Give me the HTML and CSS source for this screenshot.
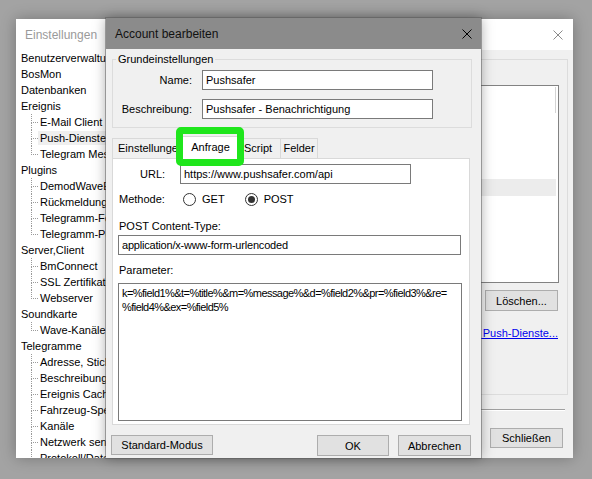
FILE: index.html
```
<!DOCTYPE html>
<html>
<head>
<meta charset="utf-8">
<title>Account bearbeiten</title>
<link rel="stylesheet" href="styles.css">
</head>
<body>
<div class="desktop">
  <div class="window main-win">
    <div class="titlebar main-title">
      <span class="title-text">Einstellungen</span>
      <svg class="close-icon" width="10" height="10" viewBox="0 0 10 10"><path d="M0.5 0.5L9.5 9.5M9.5 0.5L0.5 9.5" stroke="#8a8a8a" stroke-width="1" fill="none"/></svg>
    </div>
    <div class="main-body">
      <ul class="tree">
        <li class="root">Benutzerverwaltung</li>
        <li class="root">BosMon</li>
        <li class="root">Datenbanken</li>
        <li class="root">Ereignis</li>
        <li class="child">E-Mail Client</li>
        <li class="child"><span class="sel">Push-Dienste</span></li>
        <li class="child last">Telegram Messenger</li>
        <li class="root">Plugins</li>
        <li class="child">DemodWaveEngine</li>
        <li class="child">Rückmeldungen</li>
        <li class="child">Telegramm-Fernwirk</li>
        <li class="child last">Telegramm-Post</li>
        <li class="root">Server,Client</li>
        <li class="child">BmConnect</li>
        <li class="child">SSL Zertifikate</li>
        <li class="child last">Webserver</li>
        <li class="root">Soundkarte</li>
        <li class="child last">Wave-Kanäle</li>
        <li class="root">Telegramme</li>
        <li class="child">Adresse, Stichwort</li>
        <li class="child">Beschreibungen</li>
        <li class="child">Ereignis Cache</li>
        <li class="child">Fahrzeug-Speicher</li>
        <li class="child">Kanäle</li>
        <li class="child">Netzwerk senden</li>
        <li class="child">Protokoll/Datei</li>
      </ul>
      <div class="right-col">
        <div class="group-right">
          <div class="listbox">
            <div class="scroll-thumb"></div>
            <div class="list-sel"></div>
          </div>
          <div class="btn btn-loeschen">Löschen...</div>
          <a class="link">Weitere Push-Dienste...</a>
        </div>
        <div class="separator"></div>
        <div class="main-buttons">
          <div class="btn btn-close">Schließen</div>
        </div>
      </div>
    </div>
  </div>

  <div class="window dialog">
    <div class="titlebar dlg-title">
      <span class="title-text">Account bearbeiten</span>
      <svg class="close-icon" width="10" height="10" viewBox="0 0 10 10"><path d="M0.5 0.5L9.5 9.5M9.5 0.5L0.5 9.5" stroke="#000" stroke-width="1" fill="none"/></svg>
    </div>
    <div class="dlg-body">
      <fieldset class="group">
        <legend>Grundeinstellungen</legend>
        <div class="form-grid">
          <span class="lbl">Name:</span>
          <div class="input">Pushsafer</div>
          <span class="lbl">Beschreibung:</span>
          <div class="input">Pushsafer - Benachrichtigung</div>
        </div>
      </fieldset>

      <div class="tabs">
        <div class="tab tab-einst">Einstellungen</div>
        <div class="tab tab-active">Anfrage</div>
        <div class="tab tab-script">Script</div>
        <div class="tab tab-felder">Felder</div>
      </div>
      <div class="tab-panel">
        <div class="row-url">
          <span class="lbl-url">URL:</span>
          <div class="input input-url">https://www.pushsafer.com/api</div>
        </div>
        <div class="row-method">
          <span class="lbl-method">Methode:</span>
          <span class="radio"></span>
          <span class="radio-text">GET</span>
          <span class="radio checked"></span>
          <span class="radio-text">POST</span>
        </div>
        <div class="plain-lbl lbl-ct">POST Content-Type:</div>
        <div class="input input-wide input-ct">application/x-www-form-urlencoded</div>
        <div class="plain-lbl lbl-param">Parameter:</div>
        <div class="textarea">k=%field1%&amp;t=%title%&amp;m=%message%&amp;d=%field2%&amp;pr=%field3%&amp;re=<br>%field4%&amp;ex=%field5%</div>
      </div>

      <div class="dlg-buttons">
        <div class="btn btn-std">Standard-Modus</div>
        <div class="btn btn-ok">OK</div>
        <div class="btn btn-cancel">Abbrechen</div>
      </div>
    </div>
  </div>

  <div class="highlight"></div>
</div>
</body>
</html>
```

FILE: styles.css
```
* { box-sizing: border-box; }

html, body {
  margin: 0;
  padding: 0;
  width: 592px;
  height: 479px;
  overflow: hidden;
  background: #a3a3a3;
  font-family: "Liberation Sans", Arial, sans-serif;
  font-size: 11px;
  color: #000;
}

.desktop {
  position: relative;
  width: 592px;
  height: 479px;
}

.window {
  position: absolute;
  display: flex;
  flex-direction: column;
  background: #f0f0f0;
}

.titlebar {
  height: 31px;
  flex: none;
  display: flex;
  align-items: center;
  justify-content: space-between;
  font-size: 12px;
}

.close-icon { display: block; }

/* ---------- main window ---------- */
.main-win {
  left: 16px;
  top: 19px;
  width: 557px;
  height: 439px;
  z-index: 1;
  box-shadow: 0 0 14px rgba(0, 0, 0, 0.28);
}

.main-title {
  background: #fff;
  padding: 1px 10px 0 9px;
}
.main-title .title-text { color: #9a9a9a; }

.main-body {
  flex: 1;
  display: flex;
  min-height: 0;
}

.tree {
  width: 200px;
  flex: none;
  margin: 0;
  padding: 0;
  list-style: none;
  background: #fff;
  overflow: hidden;
}

.tree li {
  height: 16px;
  line-height: 16px;
  white-space: nowrap;
  position: relative;
}

.tree .root { padding-left: 5px; }
.tree .child { padding-left: 24px; }

.tree .child::before {
  content: "";
  position: absolute;
  left: 15px;
  top: 0;
  width: 6px;
  height: 8px;
  border-left: 1px dotted #9a9a9a;
  border-bottom: 1px dotted #9a9a9a;
}
.tree .child:not(.last)::after {
  content: "";
  position: absolute;
  left: 15px;
  top: 8px;
  height: 8px;
  border-left: 1px dotted #9a9a9a;
}

.tree .sel {
  background: #efefef;
  padding: 1px 2px;
  margin-left: -2px;
}

.right-col {
  flex: 1;
  display: flex;
  flex-direction: column;
  padding-right: 5px;
}

.group-right {
  margin-top: 9px;
  height: 336px;
  border: 1px solid #dcdcdc;
  display: flex;
  flex-direction: column;
  align-items: flex-end;
}

.listbox {
  position: relative;
  margin-top: 25px;
  margin-right: 8px;
  width: 300px;
  height: 198px;
  border: 1px solid #828282;
  background: #fff;
  padding: 93px 2px 0 0;
}

.scroll-thumb {
  position: absolute;
  right: 2px;
  top: 1px;
  width: 1px;
  height: 26px;
  background: #d4d4d4;
}

.list-sel {
  height: 17px;
  background: #ececec;
}

.btn {
  display: flex;
  align-items: center;
  justify-content: center;
  background: #e1e1e1;
  border: 1px solid #adadad;
  white-space: nowrap;
}

.btn-loeschen {
  margin-top: 7px;
  margin-right: 9px;
  width: 73px;
  height: 21px;
}

.link {
  margin-top: 15px;
  margin-right: 9px;
  line-height: 14px;
  color: #0000ee;
  text-decoration: underline;
  white-space: nowrap;
}

.separator {
  margin-top: 14px;
  margin-right: 3px;
  border-top: 1px solid #a0a0a0;
  border-bottom: 1px solid #fff;
}

.main-buttons {
  margin-top: 17px;
  display: flex;
  justify-content: flex-end;
}

.btn-close {
  width: 73px;
  height: 20px;
  margin-right: 5px;
}

/* ---------- dialog ---------- */
.dialog {
  left: 106px;
  top: 18px;
  width: 375px;
  height: 440px;
  z-index: 2;
  box-shadow: 0 0 0 1px rgba(90, 90, 90, 0.5), 0 0 12px rgba(0, 0, 0, 0.35);
}

.dlg-title {
  background: #8b8b8b;
  padding: 1px 9px 0 9px;
  color: #111;
}

.dlg-body {
  flex: 1;
  display: flex;
  flex-direction: column;
  padding: 3px 9px 0 6px;
}

.group {
  margin: 0;
  padding: 4px 0 8px 0;
  border: 1px solid #dcdcdc;
  min-width: 0;
}

.group legend {
  margin-left: 3px;
  padding: 0 2px;
  line-height: 14px;
}

.form-grid {
  display: grid;
  grid-template-columns: 79px 231px;
  column-gap: 10px;
  row-gap: 9px;
  align-items: center;
}

.lbl { text-align: right; }

.input {
  height: 20px;
  border: 1px solid #7a7a7a;
  background: #fff;
  padding: 0 3px;
  line-height: 18px;
  white-space: nowrap;
  overflow: hidden;
}

.tabs {
  margin-top: 10px;
  height: 20px;
  display: flex;
  align-items: flex-end;
  position: relative;
  z-index: 1;
}

.tab {
  height: 20px;
  border: 1px solid #d9d9d9;
  border-bottom: none;
  background: #f0f0f0;
  line-height: 19px;
  white-space: nowrap;
  overflow: hidden;
  margin-right: -1px;
}

.tab-einst { width: 67px; padding-left: 5px; }
.tab-active {
  width: 65px;
  height: 23px;
  margin-bottom: -1px;
  background: #fff;
  text-align: center;
  line-height: 21px;
}
.tab-script { width: 39px; padding-left: 1px; }
.tab-felder { width: 38px; text-align: center; }

.tab-panel {
  margin-right: 2px;
  height: 267px;
  border: 1px solid #d9d9d9;
  background: #fff;
  padding: 5px 0 0 5px;
  display: flex;
  flex-direction: column;
}

.row-url {
  display: flex;
  align-items: center;
  height: 20px;
}
.lbl-url { margin-left: 22px; width: 40px; }
.input-url { width: 231px; }

.row-method {
  margin-top: 5px;
  height: 20px;
  display: flex;
  align-items: center;
}
.lbl-method { width: 65px; padding-left: 1px; }

.radio {
  width: 13px;
  height: 13px;
  border: 1px solid #333;
  border-radius: 50%;
  background: #fff;
  display: flex;
  align-items: center;
  justify-content: center;
}
.radio.checked::after {
  content: "";
  width: 7px;
  height: 7px;
  border-radius: 50%;
  background: #333;
}
.radio-text { margin-left: 6px; margin-right: 20px; }

.plain-lbl {
  line-height: 14px;
  padding-left: 1px;
}
.lbl-ct { margin-top: 10px; }
.input-wide { margin-top: 2px; width: 343px; }
.input-ct { letter-spacing: -0.2px; }
.lbl-param { margin-top: 8px; }

.textarea {
  margin-top: 6px;
  width: 344px;
  height: 138px;
  border: 1px solid #7a7a7a;
  background: #fff;
  padding: 2px 3px;
  line-height: 14px;
  letter-spacing: -0.55px;
  white-space: nowrap;
  overflow: hidden;
}

.dlg-buttons {
  margin-top: 10px;
  margin-right: 1px;
  display: flex;
  align-items: flex-start;
}

.btn-std { margin-left: -1px; width: 102px; height: 20px; }
.btn-ok { margin-left: auto; width: 72px; height: 21px; }
.btn-cancel { margin-left: 9px; width: 73px; height: 21px; }

/* annotation highlight around the active tab */
.highlight {
  position: absolute;
  z-index: 5;
  left: 176px;
  top: 127px;
  width: 68px;
  height: 39px;
  border: 7px solid #1fe61c;
  border-radius: 5px;
}
```
